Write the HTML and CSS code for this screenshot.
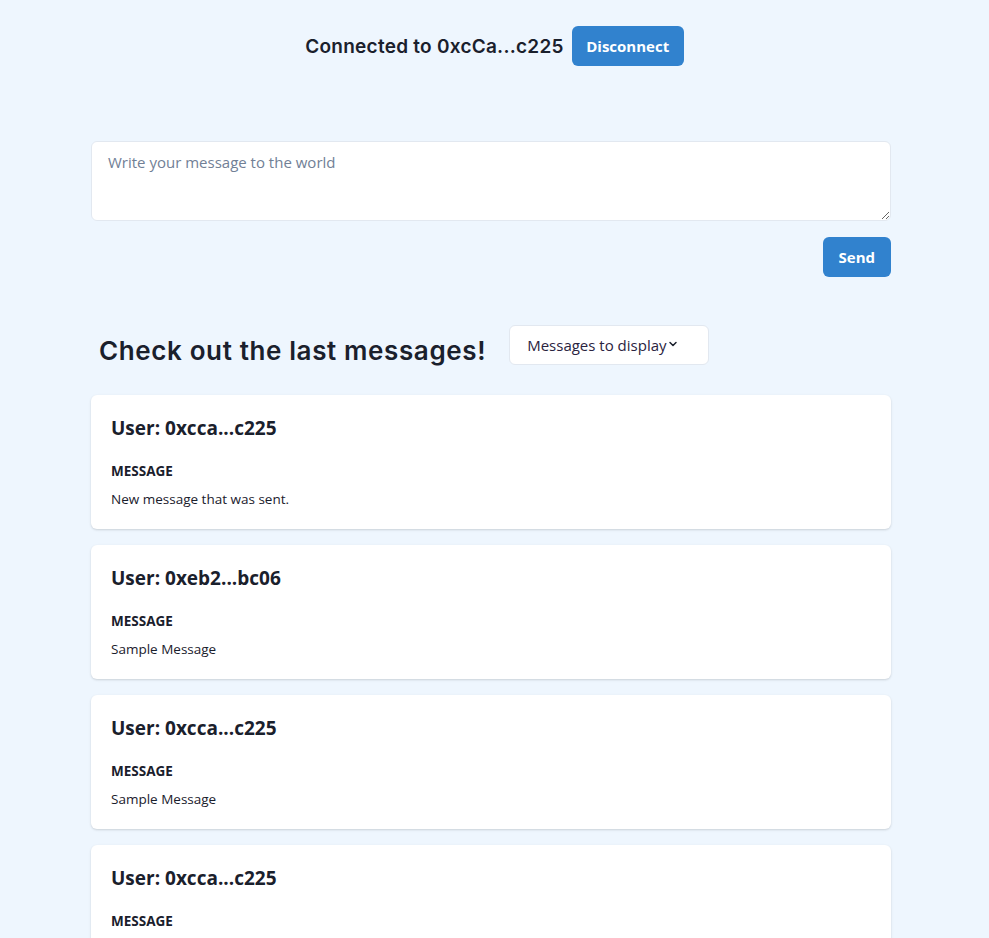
FILE: index.html
```html
<!DOCTYPE html>
<html lang="en">
<head>
<meta charset="utf-8">
<title>Messages</title>
<link rel="stylesheet" href="styles.css">
</head>
<body>
<header class="topbar">
  <span class="connected">Connected to 0xcCa...c225</span>
  <button class="btn btn-compact">Disconnect</button>
</header>
<main class="container">
  <section class="composer">
    <textarea class="message-input" placeholder="Write your message to the world"></textarea>
    <div class="composer-actions">
      <button class="btn">Send</button>
    </div>
  </section>
  <section class="feed-head">
    <h2 class="feed-title">Check out the last messages!</h2>
    <div class="select">
      <span>Messages to display</span>
      <svg class="chev" viewBox="0 0 24 24" width="12" height="12"><path d="M6 9l6 6 6-6" fill="none" stroke="#1A202C" stroke-width="3" stroke-linecap="round" stroke-linejoin="round"/></svg>
    </div>
  </section>
  <section class="cards">
    <article class="card">
      <h3 class="card-title">User: 0xcca...c225</h3>
      <h4 class="label">Message</h4>
      <p class="text">New message that was sent.</p>
    </article>
    <article class="card">
      <h3 class="card-title">User: 0xeb2...bc06</h3>
      <h4 class="label">Message</h4>
      <p class="text">Sample Message</p>
    </article>
    <article class="card">
      <h3 class="card-title">User: 0xcca...c225</h3>
      <h4 class="label">Message</h4>
      <p class="text">Sample Message</p>
    </article>
    <article class="card">
      <h3 class="card-title">User: 0xcca...c225</h3>
      <h4 class="label">Message</h4>
      <p class="text">Sample Message</p>
    </article>
  </section>
</main>
</body>
</html>
```
FILE: styles.css
```css
* { box-sizing: border-box; }
html, body { margin: 0; padding: 0; }
body {
  background: #EEF6FE;
  color: #1A202C;
  font-family: "Open Sans", "Noto Sans", sans-serif;
  font-size: 16px;
  overflow: hidden;
  height: 938px;
}
.topbar {
  display: flex;
  justify-content: center;
  align-items: center;
  gap: 8px;
  padding-top: 26px;
  height: 66px;
}
.connected {
  font-family: "Inter", sans-serif;
  font-weight: 600;
  font-size: 19px;
  letter-spacing: 0.25px;
}
.btn {
  font-family: "Open Sans", sans-serif;
  font-weight: 700;
  font-size: 15px;
  color: #fff;
  background: #3182CE;
  border: none;
  border-radius: 6px;
  height: 40px;
  padding: 0 16px;
}
.btn-compact { padding: 0 14.5px; }
.container {
  width: 800px;
  margin: 75px 0 0 91px;
}
.message-input {
  display: block;
  width: 100%;
  height: 80px;
  border: 1px solid #E2E8F0;
  border-radius: 6px;
  background: #fff;
  padding: 8px 16px;
  font-family: "Open Sans", sans-serif;
  font-size: 15px;
  line-height: 24px;
  resize: vertical;
}
.message-input::placeholder { color: #718096; }
.composer-actions {
  display: flex;
  justify-content: flex-end;
  margin-top: 16px;
}
.feed-head {
  display: flex;
  align-items: flex-start;
  gap: 23px;
  margin-top: 48px;
  padding-left: 8px;
  height: 40px;
}
.feed-title {
  margin: 12px 0 0;
  font-family: "Inter", sans-serif;
  font-weight: 600;
  font-size: 26px;
  line-height: 28px;
  letter-spacing: 0.62px;
}
.select {
  width: 200px;
  height: 40px;
  background: #fff;
  border: 1px solid #E2E8F0;
  border-radius: 6px;
  display: flex;
  align-items: center;
  padding-left: 17px;
  font-size: 15px;
  color: #2A2340;
}
.chev { margin-left: 0; margin-top: -2px; }
.cards {
  display: flex;
  flex-direction: column;
  gap: 16px;
  margin-top: 30px;
}
.card {
  background: #fff;
  border-radius: 6px;
  box-shadow: 0 1px 3px rgba(0,0,0,0.1), 0 1px 2px rgba(0,0,0,0.06);
  padding: 21px 20px 20px;
  height: 134px;
}
.card-title {
  margin: 0;
  font-size: 19px;
  font-weight: 700;
  line-height: 24px;
}
.label {
  margin: 23px 0 0;
  font-size: 13.5px;
  font-weight: 700;
  text-transform: uppercase;
  line-height: 17px;
}
.text {
  margin: 9px 0 0;
  font-size: 13.5px;
  line-height: 21px;
}
```
